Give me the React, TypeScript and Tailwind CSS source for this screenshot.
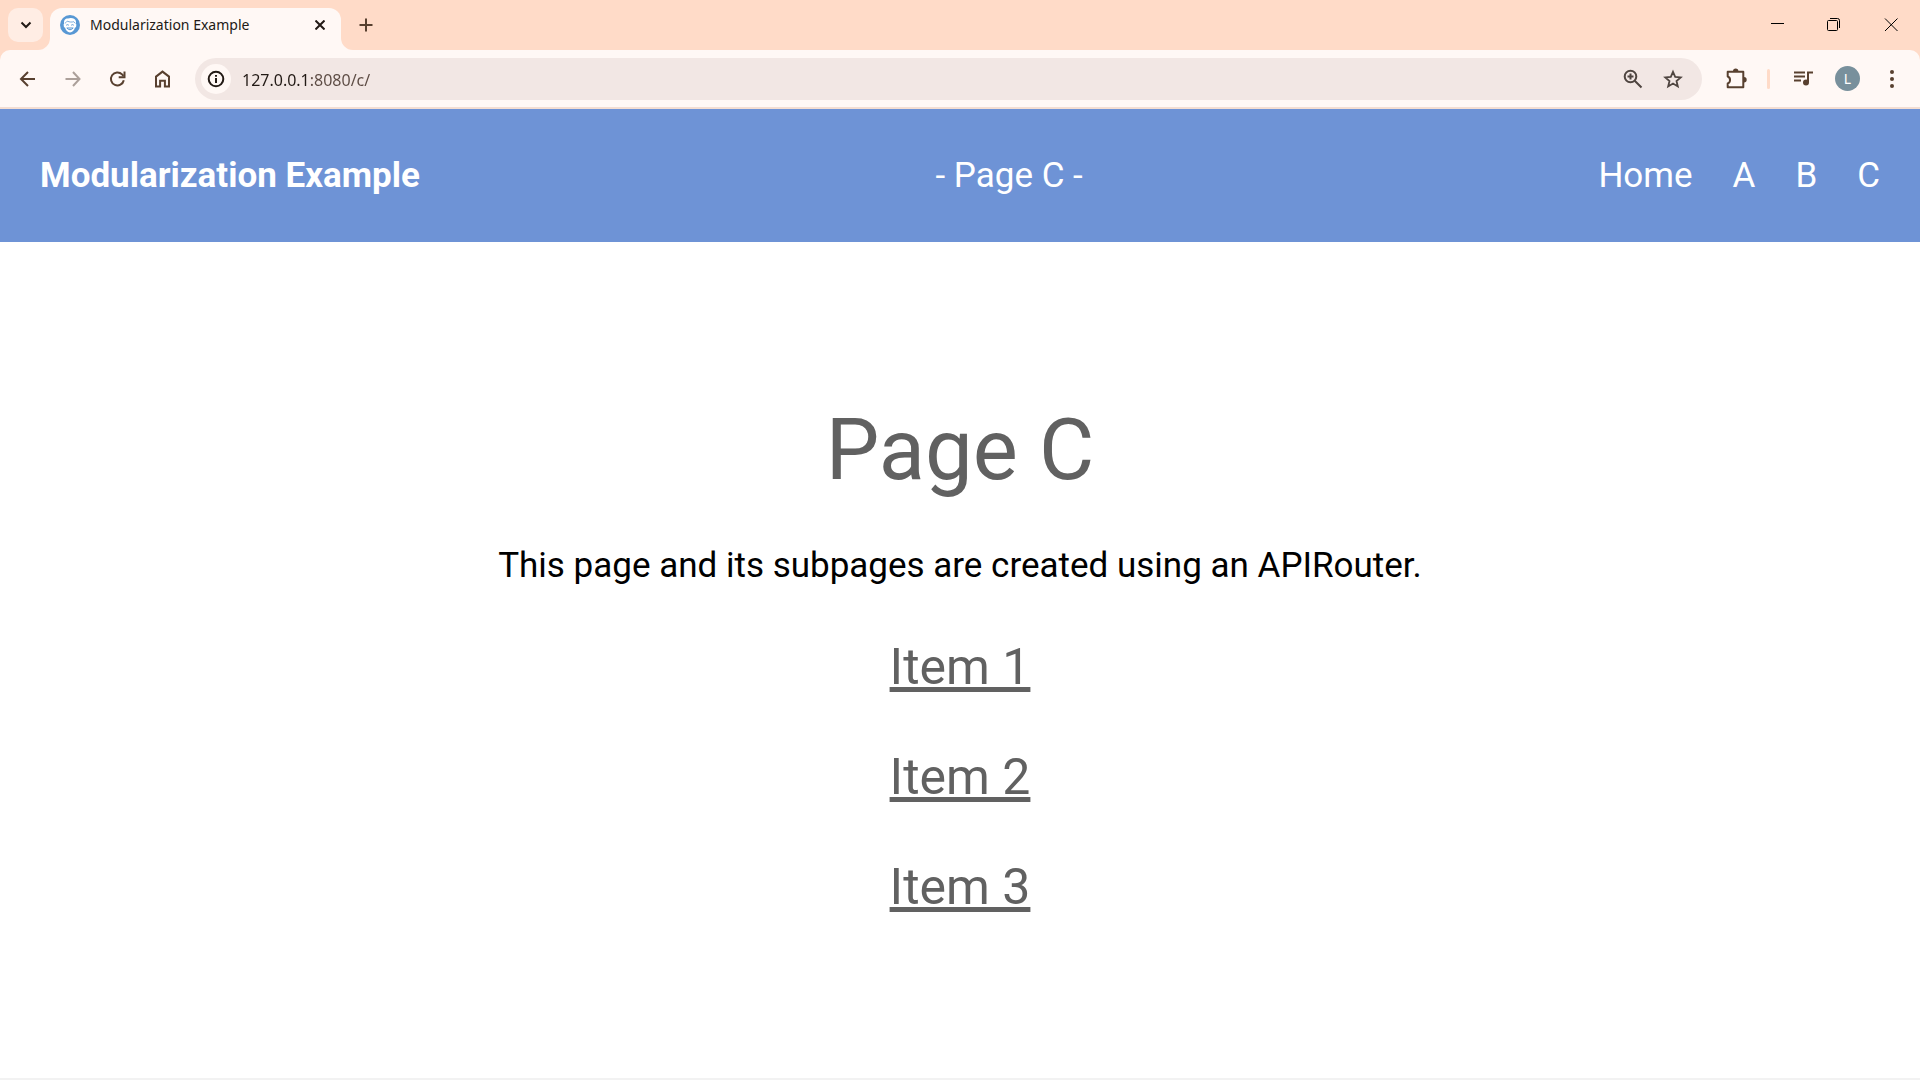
import type { ReactNode } from "react";

function IconButton({ label, className = "w-[45px]", children }: { label: string; className?: string; children: ReactNode }) {
  return (
    <button type="button" aria-label={label} className={`flex h-[42px] shrink-0 items-center justify-center text-[#58402f] ${className}`}>
      {children}
    </button>
  );
}

function Icon({ size = 22, className = "", children }: { size?: number; className?: string; children: ReactNode }) {
  return (
    <svg width={size} height={size} viewBox={`0 0 ${size} ${size}`} fill="none" stroke="currentColor" strokeWidth="2" className={className} aria-hidden="true">
      {children}
    </svg>
  );
}

function Favicon() {
  return (
    <svg width="20" height="20" viewBox="0 0 20 20" aria-hidden="true">
      <circle cx="10" cy="10" r="10" fill="#5898d4" />
      <path d="M4.2 8.6C3.4 5.2 5.6 3.4 8 3.6C10.5 2.3 15.2 3 15.9 6C16.1 7 16 7.9 15.7 8.7L16.4 9.4L16 12.2L15 12.6C14.3 15.6 12.3 17.4 10 17.4S5.700 15.600 5 12.600L4 12.200L3.600 9.400Z" fill="#fff" />
      <path d="M5 8.200C6.300 7.300 7 6.700 7.300 6.100C9.500 7.300 12 7.200 13.700 6.700L15 8.200" fill="none" stroke="#5898d4" strokeWidth="0.800" />
      <path d="M6.200 10.200Q7.500 9.100 8.800 10.200M11.200 10.200Q12.500 9.100 13.800 10.200M6.800 13Q10 16.500 13.200 13Z" fill="none" stroke="#5898d4" strokeWidth="1" />
    </svg>
  );
}

function TabStrip() {
  return (
    <div className="flex h-[50px] bg-[#ffdbc8]">
      <button type="button" aria-label="Search tabs" className="mt-2 ml-2 flex h-[34px] w-[35px] items-center justify-center rounded-[10px] bg-[#ffede4] text-[#221a15]">
        <svg width="12" height="8" viewBox="0 0 12 8" fill="none" stroke="currentColor" strokeWidth="2" aria-hidden="true">
          <path d="M1.500 1.500L6 6L10.500 1.500" />
        </svg>
      </button>
      <div className="relative mt-2 ml-[7px] flex h-[42px] w-[291px] items-center rounded-t-[12px] bg-[#fff8f5] pr-[11px] pl-[10px]">
        <svg width="12" height="12" viewBox="0 0 12 12" className="absolute bottom-0 -left-3" aria-hidden="true">
          <path d="M12 0V12H0A12 12 0 0 0 12 0Z" fill="#fff8f5" />
        </svg>
        <svg width="12" height="12" viewBox="0 0 12 12" className="absolute -right-3 bottom-0" aria-hidden="true">
          <path d="M0 0V12H12A12 12 0 0 1 0 0Z" fill="#fff8f5" />
        </svg>
        <div className="flex h-[34px] w-full items-center self-start">
          <Favicon />
          <span className="ml-[10px] flex-1 text-[14px] leading-[22px] whitespace-nowrap text-[#221a15]">Modularization Example</span>
          <button type="button" aria-label="Close tab" className="flex size-5 items-center justify-center text-[#221a15]">
            <svg width="10" height="10" viewBox="0 0 10 10" stroke="currentColor" strokeWidth="2" aria-hidden="true">
              <path d="M0.500 0.500L9.500 9.500M9.500 0.500L0.500 9.500" />
            </svg>
          </button>
        </div>
      </div>
      <button type="button" aria-label="New tab" className="mt-2 ml-[7px] flex h-[34px] w-[35px] items-center justify-center text-[#58402f]">
        <svg width="14" height="14" viewBox="0 0 14 14" stroke="currentColor" strokeWidth="2" aria-hidden="true">
          <path d="M7 0.500V13.500M0.500 7H13.500" />
        </svg>
      </button>
      <div className="ml-auto flex text-black">
        <button type="button" aria-label="Minimize" className="flex w-[57px] items-center justify-center">
          <svg width="14" height="14" viewBox="0 0 14 14" stroke="currentColor" aria-hidden="true">
            <path d="M1 5.500H14" />
          </svg>
        </button>
        <button type="button" aria-label="Restore" className="flex w-[57px] items-center justify-center">
          <svg width="14" height="14" viewBox="0 0 14 14" fill="none" stroke="currentColor" aria-hidden="true">
            <rect x="0.500" y="2.500" width="10" height="10" rx="1" />
            <path d="M3 0.500H10.500Q12.500 0.500 12.500 2.500V10" />
          </svg>
        </button>
        <button type="button" aria-label="Close" className="flex w-[58px] items-center justify-center">
          <svg width="14" height="14" viewBox="0 0 14 14" stroke="currentColor" aria-hidden="true">
            <path d="M1 0.500L13.500 13M13.500 0.500L1 13" />
          </svg>
        </button>
      </div>
    </div>
  );
}

function Toolbar() {
  return (
    <div className="bg-[#ffdbc8]">
      <div className="flex h-[59px] items-center rounded-t-[10px] border-b-2 border-[#f3ddd2] bg-[#fff8f5] pr-[6px] pl-[5px]">
        <IconButton label="Back">
          <Icon><path d="M18 11H4.500M11 4L4 11L11 18" /></Icon>
        </IconButton>
        <IconButton label="Forward">
          <Icon className="text-[#aca09a]"><path d="M3.500 11H17M11 4L17.500 11L11 18" /></Icon>
        </IconButton>
        <IconButton label="Reload">
          <Icon>
            <path d="M16.800 12.300A6.500 6.500 0 1 1 15.100 6.400L16.500 8" />
            <path d="M17.500 3.500V9.300H11.700" />
          </Icon>
        </IconButton>
        <IconButton label="Home">
          <Icon><path d="M4 8.600L10.500 3.600L17 8.600V18.500H12.900V12.800H8.100V18.500H4Z" /></Icon>
        </IconButton>
        <div className="ml-[10px] flex h-[42px] min-w-0 flex-1 items-center rounded-full bg-[#f2e7e4] pr-[9px] pl-[6px]">
          <button type="button" aria-label="View site information" className="flex size-[30px] shrink-0 items-center justify-center rounded-full bg-[#fff8f5] text-[#221a15]">
            <svg width="18" height="18" viewBox="0 0 18 18" fill="none" stroke="currentColor" strokeWidth="2" aria-hidden="true">
              <circle cx="9" cy="9" r="7.300" />
              <path d="M9 8V13M9 5V6.800" />
            </svg>
          </button>
          <input
            type="text"
            aria-label="Address"
            defaultValue="127.0.0.1:8080/c/"
            className="ml-[11px] min-w-0 flex-1 bg-[linear-gradient(90deg,#221a15_67px,#5b4a42_67px)] bg-clip-text pt-0.5 text-[16px] leading-6 text-transparent outline-none"
          />
          <IconButton label="Zoom" className="w-10">
            <Icon className="text-[#4f4540]">
              <circle cx="8.500" cy="8.500" r="5.800" />
              <path d="M12.700 12.700L19.500 19.500M8.500 5.500V11.500M5.500 8.500H11.500" />
            </Icon>
          </IconButton>
          <IconButton label="Bookmark this tab" className="w-10">
            <Icon className="text-[#4f4540]">
              <path d="M11 3.800L13.200 8.900L18.700 9.400L14.500 13L15.800 18.400L11 15.500L6.200 18.400L7.500 13L3.300 9.400L8.800 8.900Z" strokeWidth="1.800" />
            </Icon>
          </IconButton>
        </div>
        <IconButton label="Extensions" className="ml-[11px] w-[45px]">
          <Icon>
            <path d="M2.700 3.800H18.300V19.300H2.700V15.500C5.800 14.500 5.800 9.500 2.700 8.500Z" strokeLinejoin="round" />
            <path d="M8 3.300A2.700 2.700 0 0 1 13.400 3.300ZM19 9A2.700 2.700 0 0 1 19 14.400Z" fill="currentColor" stroke="none" />
          </Icon>
        </IconButton>
        <span className="ml-[9px] h-5 w-[3px] rounded-full bg-[#ffdbc8]" />
        <IconButton label="Media controls" className="ml-[10px] w-[45px]">
          <Icon>
            <path d="M2 4.500H13M2 8.500H13M2 12.500H9" />
            <path d="M16 14V4.500H21" />
            <circle cx="14" cy="14.500" r="3" fill="currentColor" stroke="none" />
          </Icon>
        </IconButton>
        <IconButton label="Profile">
          <span className="flex size-[25px] items-center justify-center rounded-full bg-[#78909c] text-[14px] leading-none text-white">L</span>
        </IconButton>
        <IconButton label="Browser menu" className="w-11">
          <Icon>
            <g fill="currentColor" stroke="none">
              <circle cx="11" cy="4" r="2" />
              <circle cx="11" cy="11" r="2" />
              <circle cx="11" cy="18" r="2" />
            </g>
          </Icon>
        </IconButton>
      </div>
    </div>
  );
}

const NAV = [
  { label: "Home", href: "#home" },
  { label: "A", href: "#a" },
  { label: "B", href: "#b" },
  { label: "C", href: "#c" },
];

const ITEMS = ["Item 1", "Item 2", "Item 3"];

export default function App() {
  return (
    <div className="flex min-h-screen flex-col bg-white font-['Noto_Sans',sans-serif]">
      <TabStrip />
      <Toolbar />
      <header className="flex items-center justify-between bg-[#6e93d6] px-10 py-10 font-['Roboto',sans-serif] text-[35px] leading-[53px] text-white">
        <span className="font-bold">Modularization Example</span>
        <span>- Page C -</span>
        <nav className="flex gap-10">
          {NAV.map((n) => (
            <a key={n.label} href={n.href}>{n.label}</a>
          ))}
        </nav>
      </header>
      <main className="flex flex-1 flex-col items-center justify-center gap-10 border-b-2 border-[#f2f2f2] pt-0.5 font-['Roboto',sans-serif]">
        <h1 className="text-[85px] leading-[100px] text-[#616161]">Page C</h1>
        <p className="text-[35px] leading-[52px] text-black">This page and its subpages are created using an APIRouter.</p>
        {ITEMS.map((item) => (
          <a key={item} href={`#${item}`} className="text-[50px] leading-[70px] text-[#616161] underline">{item}</a>
        ))}
      </main>
    </div>
  );
}
